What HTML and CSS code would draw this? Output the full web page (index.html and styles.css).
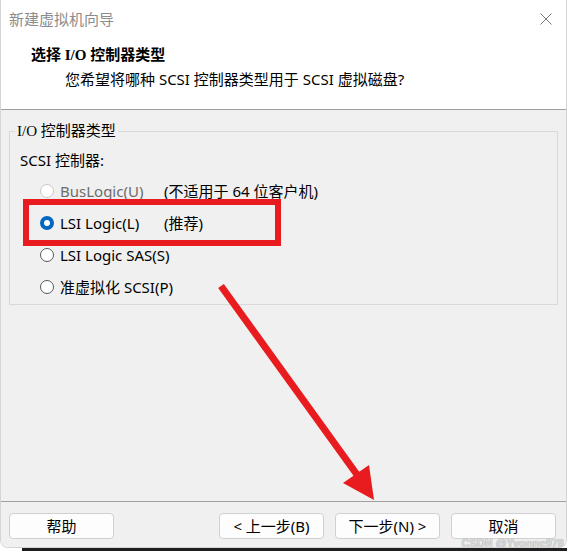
FILE: index.html
```html
<!DOCTYPE html>
<html lang="zh">

<head>
    <meta charset="UTF-8" />
    <meta name="viewport" content="width=device-width, initial-scale=1.0" />
    <title>新建虚拟机向导</title>
    <link rel="stylesheet" href="styles.css">
</head>

<body>
    <div class="window">
        <div class="titlebar">
            <span class="title">新建虚拟机向导</span>
            <svg class="close" width="12" height="12" viewBox="0 0 12 12">
                <path d="M0.5 0.5 L11.5 11.5 M11.5 0.5 L0.5 11.5" stroke="#7a7a7a" stroke-width="1" fill="none" />
            </svg>
        </div>

        <div class="header">
            <h1>选择 I/O 控制器类型</h1>
            <p>您希望将哪种 SCSI 控制器类型用于 SCSI 虚拟磁盘?</p>
        </div>

        <div class="content">
            <fieldset class="group">
                <legend>I/O 控制器类型</legend>
                <div class="caption">SCSI 控制器:</div>
                <div class="options">
                    <div class="option disabled">
                        <span class="radio"></span>
                        <span class="name">BusLogic(U)</span>
                        <span class="note">(不适用于 64 位客户机)</span>
                    </div>
                    <div class="option">
                        <span class="radio checked"></span>
                        <span class="name">LSI Logic(L)</span>
                        <span class="note">(推荐)</span>
                    </div>
                    <div class="option">
                        <span class="radio"></span>
                        <span class="name">LSI Logic SAS(S)</span>
                    </div>
                    <div class="option">
                        <span class="radio"></span>
                        <span class="name">准虚拟化 SCSI(P)</span>
                    </div>
                </div>
            </fieldset>

            <!-- annotations drawn over the dialog -->
            <div class="highlight"></div>
            <svg class="arrow" width="567" height="392" viewBox="0 0 567 392">
                <line x1="220" y1="176" x2="357" y2="366" stroke="#e81c1e" stroke-width="7" />
                <polygon points="373,390 342,373 368,355" fill="#e81c1e" />
            </svg>
        </div>

        <div class="footer">
            <button class="btn help">帮助</button>
            <button class="btn">&lt; 上一步(B)</button>
            <button class="btn">下一步(N) &gt;</button>
            <button class="btn">取消</button>
            <span class="watermark">CSDN @Yvonne978</span>
        </div>
    </div>
    <div class="taskbar"></div>
</body>

</html>
```

FILE: styles.css
```css
html,
body {
    margin: 0;
    padding: 0;
    background: #fff;
}

body {
    width: 567px;
    height: 551px;
    overflow: hidden;
    font-family: "Noto Sans", "Noto Sans CJK SC", sans-serif;
    font-size: 15px;
    color: #000;
}

.window {
    width: 565px;
    height: 547px;
    display: flex;
    flex-direction: column;
    border: 1px solid #d4d4d4;
    border-top: none;
    border-radius: 0 0 8px 8px;
    overflow: hidden;
    position: relative;
}

.titlebar {
    height: 38px;
    display: flex;
    align-items: center;
    justify-content: space-between;
    padding: 0 14px 2px 8px;
    background: #fff;
}

.title {
    color: #8c8c8c;
    font-size: 15px;
    line-height: 20px;
}

.header {
    height: 70px;
    background: #fff;
    border-bottom: 1px solid #a0a0a0;
    padding-top: 5px;
    box-sizing: border-box;
}

.header h1 {
    margin: 0 0 4px 30px;
    font-family: "Liberation Serif", "Noto Sans CJK SC", serif;
    font-size: 15px;
    font-weight: bold;
    line-height: 20px;
}

.header p {
    margin: 0 0 0 64px;
    line-height: 20px;
}

.content {
    flex: 1;
    background: #f0f0f0;
    padding: 11px 8px 0 8px;
    position: relative;
}

.group {
    margin: 0;
    padding: 0 5px 2px;
    border: 1px solid #d9d9d9;
    min-width: 0;
}

.group legend {
    padding: 0 2px;
    font-family: "Liberation Serif", "Noto Sans CJK SC", serif;
    line-height: 20px;
}

.caption {
    margin: 9px 0 0 5px;
    line-height: 20px;
}

.options {
    margin-top: 5px;
}

.option {
    height: 32px;
    display: grid;
    grid-template-columns: 14px 98px auto;
    column-gap: 6px;
    align-items: center;
    padding-left: 25px;
    line-height: 20px;
    white-space: nowrap;
}

.option:last-child {
    height: 31px;
}

.radio {
    width: 12px;
    height: 12px;
    border: 1px solid #5a5a5a;
    border-radius: 50%;
    background: #fff;
}

.radio.checked {
    width: 6px;
    height: 6px;
    border: 4px solid #0067c0;
}

.disabled .radio {
    border-color: #c8c8c8;
}

.disabled .name {
    color: #6d6d6d;
}

.highlight {
    position: absolute;
    left: 22px;
    top: 89px;
    width: 246px;
    height: 35px;
    border: 6px solid #e81c1e;
}

.arrow {
    position: absolute;
    left: 0;
    top: 0;
}

.footer {
    height: 46px;
    box-sizing: border-box;
    background: #f0f0f0;
    border-top: 1px solid #a0a0a0;
    display: flex;
    gap: 11px;
    padding: 11px 10px 0 8px;
    position: relative;
}

.btn {
    width: 105px;
    height: 26px;
    padding: 0;
    background: #fdfdfd;
    border: 1px solid #d0d0d0;
    border-radius: 4px;
    font-family: "Noto Sans", "Noto Sans CJK SC", sans-serif;
    font-size: 15px;
    line-height: 20px;
    color: #000;
}

.btn.help {
    margin-right: auto;
}

.watermark {
    position: absolute;
    right: 2px;
    bottom: -2px;
    font-family: "Liberation Sans", sans-serif;
    font-size: 11px;
    font-weight: bold;
    color: #dcdcdc;
    text-shadow: 0 0 1px #888;
}

.taskbar {
    height: 4px;
    margin-left: 22px;
    background: #1e1e1e;
}
```
